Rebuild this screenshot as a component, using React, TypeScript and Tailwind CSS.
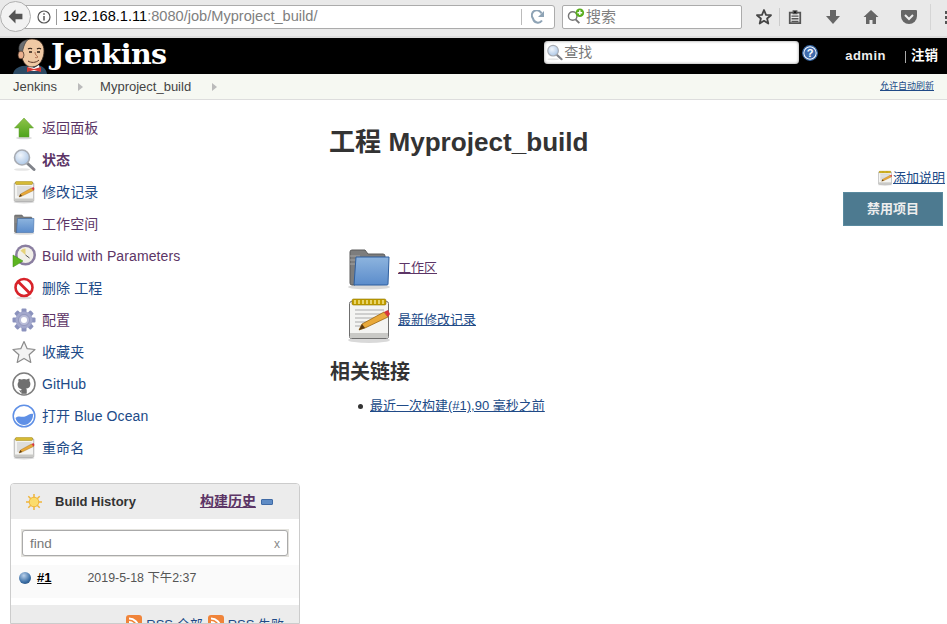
import React from "react";

const sans = { fontFamily: '"Liberation Sans", "Noto Sans CJK SC", sans-serif' };

function Notepad({ size = 24 }: { size?: number }) {
  return (
    <svg width={size} height={size} viewBox="0 0 48 48">
      <ellipse cx="24" cy="44" rx="21" ry="3" fill="#000" opacity="0.15" />
      <rect x="4.5" y="5.5" width="39" height="37" rx="2" fill="#f4f4f2" stroke="#6f6f6f" />
      <rect x="5" y="37" width="38" height="5" fill="#c9c9c6" />
      <rect x="7" y="3" width="34" height="6" rx="1.5" fill="#c4a000" stroke="#8f7500" strokeWidth="0.6" />
      <path d="M10 4v4M14 4v4M18 4v4M22 4v4M26 4v4M30 4v4M34 4v4M38 4v4" stroke="#fff7b0" strokeWidth="1.2" />
      <path d="M10 14h29M10 18h29M10 22h24M10 26h18M10 30h12" stroke="#aaa" strokeWidth="1.2" />
      <path d="M14 34l3-6 22-12 4 5-23 11z" fill="#e9a93a" stroke="#8f5902" strokeWidth="0.7" />
      <path d="M14 34l3-6 3 4z" fill="#5c3a10" />
      <path d="M39 16l4 5 2-3-2-4z" fill="#d9343a" />
    </svg>
  );
}

function Folder({ size = 24 }: { size?: number }) {
  return (
    <svg width={size} height={size} viewBox="0 0 48 48">
      <defs>
        <linearGradient id="fold" x1="0" y1="0" x2="0" y2="1">
          <stop offset="0" stopColor="#8db4de" />
          <stop offset="1" stopColor="#5b8ccb" />
        </linearGradient>
      </defs>
      <ellipse cx="24" cy="43" rx="21" ry="2.5" fill="#000" opacity="0.15" />
      <path d="M5 8a2 2 0 012-2h13l3 4h15a2 2 0 012 2v2H13l-3 27H7a2 2 0 01-2-2z" fill="#7d7d7d" stroke="#5a5a5a" />
      <path d="M5 12h10M5 16h8M5 20h7" stroke="#a5a5a5" />
      <path d="M11 13h33l-1 27a1 1 0 01-1 1H9z" fill="url(#fold)" stroke="#2f5f9e" />
    </svg>
  );
}

function GreenArrow() {
  return (
    <svg width="24" height="24" viewBox="0 0 24 24">
      <defs>
        <linearGradient id="garr" x1="0" y1="0" x2="0" y2="1">
          <stop offset="0" stopColor="#8fc34a" />
          <stop offset="1" stopColor="#4ea41a" />
        </linearGradient>
      </defs>
      <ellipse cx="12" cy="22" rx="8" ry="1.3" fill="#000" opacity="0.15" />
      <path d="M12 2l9.5 10H17v9H7v-9H2.5z" fill="url(#garr)" stroke="#5f9c2c" strokeWidth="0.5" />
    </svg>
  );
}

function Magnifier({ size = 24 }: { size?: number }) {
  return (
    <svg width={size} height={size} viewBox="0 0 24 24">
      <defs>
        <radialGradient id="lens" cx="0.4" cy="0.35" r="0.7">
          <stop offset="0" stopColor="#f2f6fb" />
          <stop offset="1" stopColor="#a9c5e6" />
        </radialGradient>
      </defs>
      <ellipse cx="10" cy="21.5" rx="8" ry="1.3" fill="#000" opacity="0.1" />
      <path d="M15 15l7 6.5" stroke="#80838a" strokeWidth="3" strokeLinecap="round" />
      <circle cx="10" cy="9.5" r="7.5" fill="url(#lens)" stroke="#a8acb3" strokeWidth="1.6" />
    </svg>
  );
}

function BuildClock() {
  return (
    <svg width="24" height="24" viewBox="0 0 24 24">
      <circle cx="13.5" cy="11" r="10.5" fill="#8a7ea0" />
      <circle cx="13.5" cy="11" r="8" fill="#f1efe8" />
      <path d="M13.5 11V4.5a6.5 6.5 0 00-5 2.3z" fill="#e6d27a" />
      <path d="M13.5 11l4 3" stroke="#555" strokeWidth="1" />
      <path d="M1 11l10 6-10 6z" fill="#5db521" stroke="#3f8a12" strokeWidth="0.5" />
    </svg>
  );
}

function NoEntry() {
  return (
    <svg width="24" height="24" viewBox="0 0 24 24">
      <ellipse cx="12" cy="22" rx="8" ry="1.3" fill="#000" opacity="0.12" />
      <circle cx="12" cy="11.5" r="8.5" fill="#fff" stroke="#d8232a" strokeWidth="2.6" />
      <path d="M6 5.5l12 12" stroke="#d8232a" strokeWidth="2.8" />
    </svg>
  );
}

function Gear() {
  const teeth = [0, 45, 90, 135, 180, 225, 270, 315];
  return (
    <svg width="24" height="24" viewBox="0 0 24 24">
      {teeth.map((a) => (
        <rect key={a} x="9.5" y="0.5" width="5" height="6" rx="1" fill="#8b92bd" transform={`rotate(${a} 12 12)`} />
      ))}
      <circle cx="12" cy="12" r="8.5" fill="#a3a8cc" />
      <circle cx="12" cy="12" r="5.5" fill="#b9bcd8" stroke="#8286ae" strokeWidth="0.6" />
      <circle cx="12" cy="12" r="3" fill="#fff" />
    </svg>
  );
}

function StarIcon() {
  return (
    <svg width="24" height="24" viewBox="0 0 24 24">
      <path d="M12 1.5l3.2 7.2 7.8.8-5.9 5.2 1.7 7.7L12 18.4l-6.8 4 1.7-7.7L1 9.5l7.8-.8z" fill="#f3f3f3" stroke="#8b8b8b" strokeWidth="1.2" strokeLinejoin="round" />
    </svg>
  );
}

function GithubIcon() {
  return (
    <svg width="24" height="24" viewBox="0 0 24 24">
      <circle cx="12" cy="12" r="11" fill="#fff" stroke="#7d7d7d" strokeWidth="1.5" />
      <path d="M9.5 21.5v-3.2c-2.6.4-3.3-.7-3.7-1.6M14.5 21.5v-3c0-.9-.3-1.5-.7-1.8 2.5-.3 4.6-1.3 4.6-5 0-1-.4-1.9-1-2.6.1-.4.4-1.4-.1-2.7 0 0-1 0-2.7 1.1a9 9 0 00-5.2 0C7.7 6.9 6.7 7 6.7 7c-.5 1.3-.2 2.3-.1 2.7-.6.7-1 1.6-1 2.6 0 3.7 2.1 4.7 4.6 5-.4.3-.7.9-.7 1.8z" fill="#6f6f6f" />
      <rect x="9.5" y="17" width="5" height="4.8" fill="#6f6f6f" />
    </svg>
  );
}

function BlueOcean() {
  return (
    <svg width="24" height="24" viewBox="0 0 24 24">
      <circle cx="12" cy="12" r="10.8" fill="#fff" stroke="#5f90e6" strokeWidth="1.5" />
      <path d="M3.5 14c3-3 6-.5 9.5-1.5 3-.8 5.500-3.500 8-2.500 .5 6-4 11-9 11-4 0-7.500-3-8.500-7z" fill="#5f90e6" />
    </svg>
  );
}

function ButlerLogo() {
  return (
    <svg width="34" height="36" viewBox="0 0 34 36" className="shrink-0">
      <path d="M0 36c1-5 5-7 9-8l16-1c4 1 8 3 9 9z" fill="#2c4a63" />
      <path d="M16 27l5 3 5-3 1 6H14z" fill="#fff" />
      <path d="M14 29l7 2 7-2v5l-7-2-7 2z" fill="#d33833" />
      <path d="M7 12C6 5 13 1 19 1c8 0 12 5 12 12 0 7-4 16-12 16-7 0-10-6-12-17z" fill="#efc9a4" stroke="#3a2a20" strokeWidth="0.8" />
      <path d="M7 16C4 8 7 3 15 1.500c-3 3-4 6-5 10l-1 5z" fill="#6a6e72" stroke="#333" strokeWidth="0.6" />
      <ellipse cx="8" cy="17" rx="3" ry="4" fill="#eab08e" stroke="#3a2a20" strokeWidth="0.7" />
      <path d="M15 11c1.500-1 3-1 4 0M24 11c1-.8 3-.8 4 0" stroke="#2a1c14" strokeWidth="1.100" fill="none" />
      <path d="M16 14h3M24 14h3" stroke="#2a1c14" strokeWidth="1.300" />
      <path d="M22 14c0 3 2 4 3 5-1 .8-2 .8-3 .4" stroke="#a8674a" strokeWidth="0.9" fill="none" />
      <path d="M15 23c3 2 8 2 11-1" stroke="#5a3526" strokeWidth="1" fill="none" />
    </svg>
  );
}

function RssIcon() {
  return (
    <svg width="16" height="16" viewBox="0 0 16 16" className="shrink-0">
      <rect width="16" height="16" rx="3" fill="#f0843a" />
      <circle cx="4.500" cy="11.500" r="1.800" fill="#fff" />
      <path d="M3 7a6 6 0 016 6M3 3.500A9.500 9.500 0 0112.500 13" stroke="#fff" strokeWidth="2" fill="none" />
    </svg>
  );
}

function Arrow() {
  return <span className="block w-0 h-0 border-y-[4px] border-y-transparent border-l-[5px] border-l-[#bbb]" />;
}

const navItems = [
  { icon: <GreenArrow />, label: "返回面板", color: "text-[#5c3566]" },
  { icon: <Magnifier />, label: "状态", color: "text-[#5c3566] font-bold" },
  { icon: <Notepad />, label: "修改记录", color: "text-[#204a87]" },
  { icon: <Folder />, label: "工作空间", color: "text-[#5c3566]" },
  { icon: <BuildClock />, label: "Build with Parameters", color: "text-[#5c3566]" },
  { icon: <NoEntry />, label: "删除 工程", color: "text-[#204a87]" },
  { icon: <Gear />, label: "配置", color: "text-[#5c3566]" },
  { icon: <StarIcon />, label: "收藏夹", color: "text-[#204a87]" },
  { icon: <GithubIcon />, label: "GitHub", color: "text-[#204a87]" },
  { icon: <BlueOcean />, label: "打开 Blue Ocean", color: "text-[#204a87]" },
  { icon: <Notepad />, label: "重命名", color: "text-[#204a87]" },
];

function BrowserBar() {
  return (
    <div className="h-[38px] shrink-0 bg-[#e9e9e9] border-b-2 border-[#dcdcdc] flex items-start relative overflow-hidden">
      <div className="absolute left-0 top-[1px] w-[31px] h-[31px] rounded-full bg-[#f2f2f2] border border-[#b0b0b0] flex items-center justify-center z-10">
        <svg width="17" height="17" viewBox="0 0 16 16">
          <path d="M8 1.500L1.500 8 8 14.500V10.500h6.500v-5H8z" fill="#555" />
        </svg>
      </div>
      <div className="ml-[20px] mt-[5px] w-[535px] h-[24px] shrink-0 bg-white border border-[#ababab] rounded-r-[3px] flex items-center pl-[16px] text-[14.6px]" style={sans}>
        <svg width="14" height="14" viewBox="0 0 14 14" className="shrink-0">
          <circle cx="7" cy="7" r="6" fill="none" stroke="#555" strokeWidth="1.200" />
          <path d="M7 6v4.500M7 3.200v1.500" stroke="#555" strokeWidth="1.500" />
        </svg>
        <span className="w-px h-[16px] bg-[#999] ml-[5px] mr-[6px]" />
        <span className="text-black">192.168.1.11</span>
        <span className="text-[#808080]">:8080/job/Myproject_build/</span>
        <span className="ml-auto w-px h-[16px] bg-[#bbb]" />
        <svg width="14" height="14" viewBox="0 0 14 14" className="mx-[9px] shrink-0">
          <path d="M10.500 3.500A5 5 0 102 8.500a5 5 0 009 2" fill="none" stroke="#8ea3b5" strokeWidth="2" />
          <path d="M13 1v6H7z" fill="#8ea3b5" />
        </svg>
      </div>
      <div className="ml-[7px] mt-[5px] w-[180px] h-[24px] shrink-0 bg-white border border-[#ababab] rounded-[2px] flex items-center pl-[4px] relative text-[15px] text-[#808080]" style={sans}>
        <svg width="19" height="18" viewBox="0 0 20 18" className="shrink-0">
          <circle cx="6" cy="8" r="4.500" fill="none" stroke="#777" strokeWidth="1.500" />
          <path d="M9 11.500l4 4" stroke="#777" strokeWidth="2" />
          <circle cx="13.500" cy="4.500" r="4.500" fill="#5aae1e" />
          <path d="M13.500 2v5M11 4.500h5" stroke="#fff" strokeWidth="1.500" />
        </svg>
        <span>搜索</span>
      </div>
      <div className="flex items-center shrink-0 h-[24px] mt-[5px] ml-[14px] text-[#555]">
        <svg width="16" height="16" viewBox="0 0 16 16">
          <path d="M8 1l2 4.800 5 .4-3.900 3.300 1.200 5L8 11.800l-4.300 2.700 1.200-5L1 6.200l5-.4z" fill="none" stroke="#444" strokeWidth="1.800" strokeLinejoin="round" />
        </svg>
        <span className="w-px h-[18px] bg-[#ccc] ml-[7px]" />
        <svg width="14" height="14" viewBox="0 0 14 16" className="ml-[8px]">
          <path d="M1 3h12v12H1z" fill="none" stroke="#555" strokeWidth="2" />
          <path d="M5 1h4v3H5zM3 7h8M3 10h8M3 13h8" stroke="#555" strokeWidth="1.500" />
        </svg>
        <svg width="16" height="16" viewBox="0 0 16 16" className="ml-[23px]">
          <path d="M5 1h6v6h4l-7 8-7-8h4z" fill="#666" />
        </svg>
        <svg width="16" height="16" viewBox="0 0 16 16" className="ml-[22px]">
          <path d="M8 1L.5 8h2.500v7h3.500v-4h3v4h3.500V8h2.500z" fill="#666" />
        </svg>
        <svg width="18" height="16" viewBox="0 0 18 16" className="ml-[21px]">
          <path d="M2 1h14a1 1 0 011 1v5a8 8 0 01-16 0V2a1 1 0 011-1z" fill="#666" />
          <path d="M5 6l4 4 4-4" fill="none" stroke="#eee" strokeWidth="2" />
        </svg>
        <span className="w-px h-[26px] bg-[#d5d5d5] ml-[12px]" />
        <span className="ml-[14px] flex flex-col gap-[2px]">
          <span className="w-[3px] h-[3px] bg-[#555]" />
          <span className="w-[3px] h-[3px] bg-[#555]" />
          <span className="w-[3px] h-[3px] bg-[#555]" />
        </span>
      </div>
    </div>
  );
}

function JenkinsHeader() {
  return (
    <div className="h-[36px] shrink-0 bg-black flex items-center relative overflow-hidden">
      <div className="ml-[13px] self-end flex items-end">
        <ButlerLogo />
      </div>
      <span className="ml-[4px] -mt-[4px] text-[28.5px] font-bold text-white leading-none" style={{ fontFamily: '"DejaVu Serif", serif', letterSpacing: "-0.6px" }}>
        Jenkins
      </span>
      <div className="ml-auto mr-[-1px] w-[255px] h-[23px] mt-[-7px] bg-white rounded-[4px] shadow-[inset_0_0_3px_#888] flex items-center pl-[2px] text-[14px] text-[#777]" style={sans}>
        <Magnifier size={17} />
        <span className="ml-px">查找</span>
      </div>
      <svg width="16" height="16" viewBox="0 0 16 16" className="ml-[4px] -mt-[6px] shrink-0">
        <circle cx="8" cy="8" r="7.300" fill="#fff" stroke="#3465a4" strokeWidth="1.300" />
        <circle cx="8" cy="8" r="5.700" fill="#3f6cae" />
        <text x="8" y="12" textAnchor="middle" fontSize="11" fontWeight="700" fill="#fff" fontFamily="Liberation Sans">?</text>
      </svg>
      <span className="ml-[27px] text-[13px] font-bold text-[#eee] tracking-[0.5px]" style={sans}>admin</span>
      <span className="ml-[19px] w-px h-[12px] bg-[#aaa] mt-[2px]" />
      <span className="ml-[5px] mr-[9px] text-[13.5px] font-bold text-white" style={sans}>注销</span>
    </div>
  );
}

function Breadcrumbs() {
  return (
    <div className="h-[26px] shrink-0 bg-[#f6f8f2] border-b border-[#ddd] flex items-center pt-px text-[13px] text-[#444]" style={sans}>
      <span className="ml-[13px]">Jenkins</span>
      <span className="ml-[21px]"><Arrow /></span>
      <span className="ml-[17px]">Myproject_build</span>
      <span className="ml-[21px]"><Arrow /></span>
      <span className="ml-auto mr-[13px] text-[9px] text-[#204a87] underline">允许自动刷新</span>
    </div>
  );
}

function BuildHistory() {
  return (
    <div className="mt-[19px] ml-[10px] w-[290px] border border-[#ccc] rounded-t-[4px] bg-white flex-1 flex flex-col overflow-hidden">
      <div className="h-[35px] shrink-0 bg-[#ececec] flex items-center pl-[15px]">
        <svg width="16" height="16" viewBox="0 0 16 16">
          <g stroke="#f0b53a" strokeWidth="1.500">
            <path d="M8 0v16M0 8h16M2.300 2.300l11.400 11.400M13.700 2.300L2.300 13.700" />
          </g>
          <circle cx="8" cy="8" r="4.800" fill="#fbdc6b" stroke="#f0b53a" />
        </svg>
        <span className="ml-[13px] text-[13px] font-bold text-[#333]">Build History</span>
        <span className="ml-[64px] text-[14px] font-bold text-[#5c3566] underline">构建历史</span>
        <span className="ml-[5px] w-[12px] h-[6px] bg-[#5f8cc5] border border-[#3f6aa5] rounded-[1px]" />
      </div>
      <div className="mx-[10px] mt-[10px] h-[28px] shrink-0 bg-[#e4e3de] p-[1px]">
        <div className="h-full bg-white border border-[#aaa] rounded-[3px] flex items-center pl-[7px] pr-[7px] pt-[2px] text-[13.5px] text-[#777]">
          <span>find</span>
          <span className="ml-auto text-[12px] text-[#888]">x</span>
        </div>
      </div>
      <div className="mt-[8px] h-[33px] shrink-0 bg-[#fafafa] flex items-center pl-[8px] pb-[7px] text-[13px]">
        <span className="w-[12px] h-[12px] rounded-full bg-[radial-gradient(circle_at_40%_30%,#b9d0ea,#3a6ea5_60%,#1f3f66)]" />
        <span className="ml-[6px] font-bold text-black underline">#1</span>
        <span className="ml-[36px] text-[12.4px] text-[#555]">2019-5-18 下午2:37</span>
      </div>
      <div className="mt-[7px] flex-1 bg-[#ececec] flex items-start justify-end pr-[15px] pt-[10px] text-[13px] text-[#204a87] whitespace-nowrap">
        <RssIcon />
        <span className="ml-[4px] underline">RSS 全部</span>
        <span className="ml-[5px]"><RssIcon /></span>
        <span className="ml-[4px] underline">RSS 失败</span>
      </div>
    </div>
  );
}

export default function App() {
  return (
    <div className="w-[947px] h-[624px] overflow-hidden bg-white flex flex-col" style={sans}>
      <BrowserBar />
      <JenkinsHeader />
      <Breadcrumbs />
      <div className="flex-1 flex min-h-0">
        <div className="w-[320px] shrink-0 flex flex-col pt-[12px]">
          {navItems.map((item) => (
            <div key={item.label} className="h-[32px] shrink-0 flex items-center pl-[12px]">
              {item.icon}
              <span className={`ml-[6px] text-[14px] tracking-[0.1px] ${item.color}`}>{item.label}</span>
            </div>
          ))}
          <BuildHistory />
        </div>
        <div className="flex-1 pl-[10px] pr-[2px] flex flex-col">
          <h1 className="mt-[27px] -ml-px text-[26.1px] leading-[30px] font-bold text-[#333]">工程 Myproject_build</h1>
          <div className="mt-[11px] h-[20px] flex items-center justify-end text-[13px] text-[#204a87]">
            <Notepad size={16} />
            <span className="underline">添加说明</span>
          </div>
          <div className="mt-[4px] self-end mr-[2px] w-[100px] h-[34px] bg-[#4d7a90] border border-[#5a8a9f] flex items-center justify-center text-[13px] font-bold text-[#eee]">
            禁用项目
          </div>
          <div className="mt-[18px] ml-[15px] flex items-center h-[48px] text-[13px]">
            <Folder size={48} />
            <span className="ml-[5px] text-[#5c3566] underline">工作区</span>
          </div>
          <div className="mt-[4px] ml-[15px] flex items-center h-[48px] text-[13px]">
            <Notepad size={48} />
            <span className="ml-[5px] text-[#204a87] underline">最新修改记录</span>
          </div>
          <h2 className="mt-[15px] text-[20px] leading-[26px] font-bold text-[#333]">相关链接</h2>
          <ul className="mt-[11px] pl-[28px] text-[13px] leading-[20px]">
            <li className="flex items-center">
              <span className="w-[5px] h-[5px] rounded-full bg-[#333] mr-[7px]" />
              <span className="text-[#204a87] underline">最近一次构建(#1),90 毫秒之前</span>
            </li>
          </ul>
        </div>
      </div>
    </div>
  );
}
